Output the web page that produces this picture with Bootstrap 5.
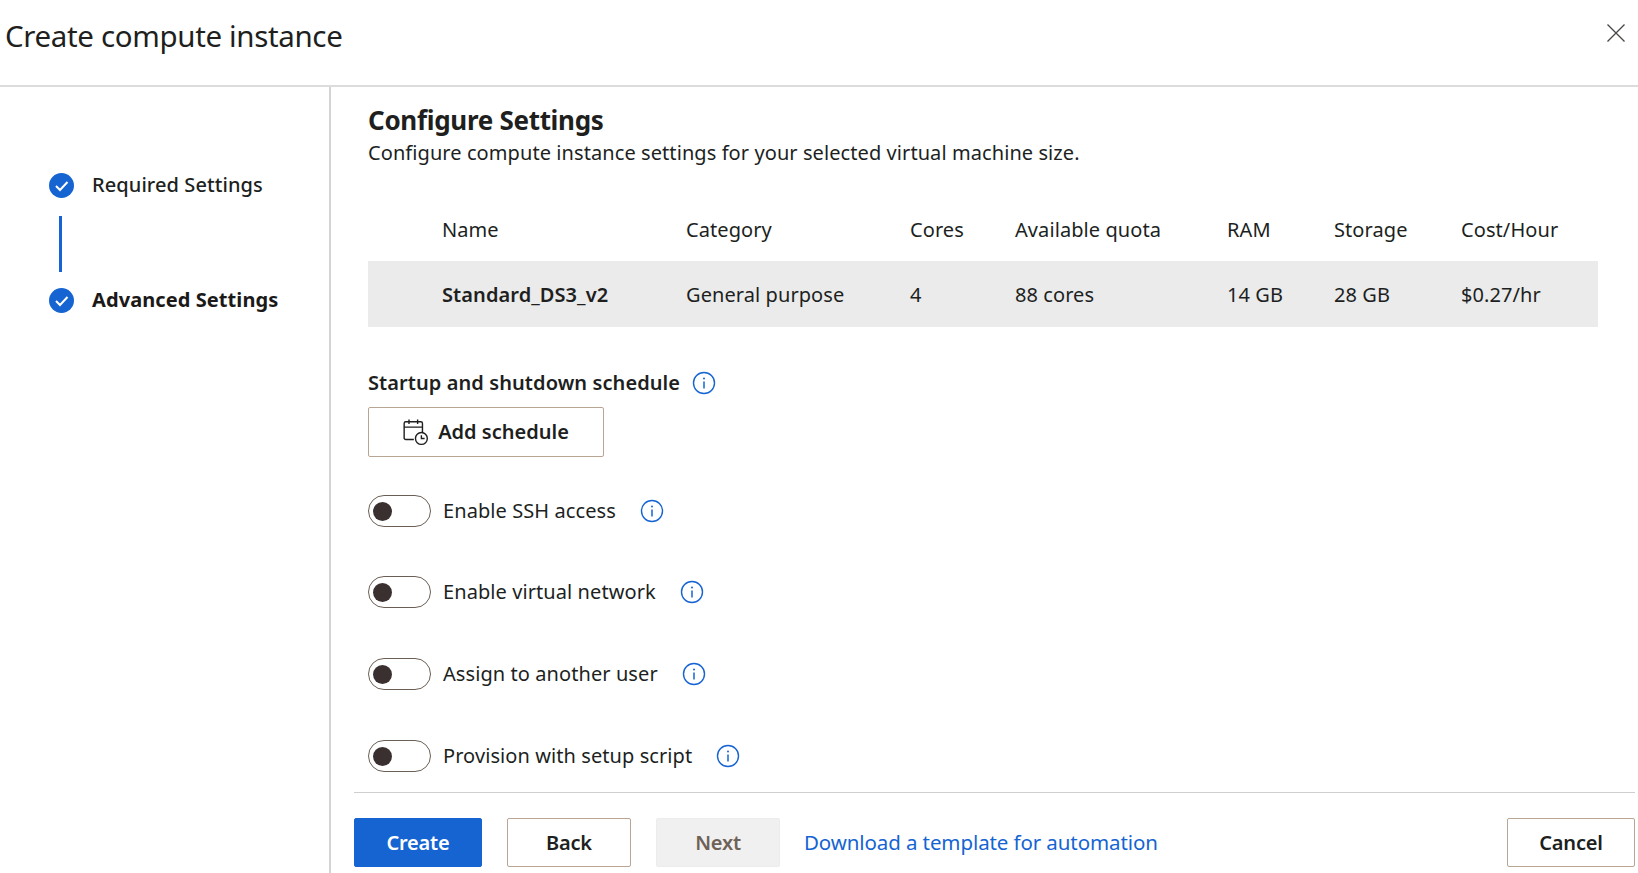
<!DOCTYPE html>
<html lang="en">
<head>
<meta charset="utf-8">
<title>Create compute instance</title>
<link href="https://cdn.jsdelivr.net/npm/bootstrap@5.3.0/dist/css/bootstrap.min.css" rel="stylesheet">
<style>
html,body{height:873px;overflow:hidden}
body{font-family:"Noto Sans","Open Sans",sans-serif;color:#201f1e;background:#fff;font-size:20px;letter-spacing:.08px}
.head-bar{height:87px;border-bottom:2px solid #dcdcdc;padding:0 12px 0 5px}
.head-title{font-size:29.500px;font-weight:400;letter-spacing:-.35px;line-height:1;margin:0 0 14px}
.close-x{width:20px;height:20px;margin:0 0 19px;padding:0;border:0;background:none;line-height:0}
.body-row{height:786px}
.side-pane{width:331px;border-right:2px solid #d4d4d4;padding:85px 0 0 49px}
.step-row{height:26px;gap:18px;font-size:20px;line-height:26px;font-weight:500}
.step-row.strong-step{font-weight:700;color:#1b1a19}
.step-link{width:3px;height:56px;background:#1564d2;margin:18px 0 15px 10px}
.right-col{min-width:0}
.main-pane{height:705px;padding:15px 41px 0 37px}
.main-title{font-size:26px;font-weight:700;line-height:36px;margin:0;letter-spacing:-.3px}
.main-sub{font-size:20px;line-height:28px;padding-top:1px;margin:0 0 43px}
.vm-grid{display:grid;grid-template-columns:318px 224px 105px 212px 107px 127px 1fr;width:1230px;margin:0 0 43px}
.vm-grid>div{display:flex;align-items:center;white-space:nowrap}
.vm-grid>.h-cell{height:51px;padding-bottom:12px}
.vm-grid>.r-cell{height:66px;background:#ebebeb;padding-top:2px}
.vm-grid>.first-cell{padding-left:74px}
.name-cell{font-weight:600}
.sched-label{font-weight:600;line-height:26px;gap:12px;font-size:20px}
.add-btn{width:236px;height:50px;margin:11px 0 38px;border:1px solid #b9a593;border-radius:2px;background:#fff;gap:9px;font-size:20px;font-weight:600;color:#201f1e;padding:0}
.opt-row{height:32px;margin-bottom:50px;line-height:32px}
.opt-row:last-child{margin-bottom:0}
.opt-row.tight-row{margin-bottom:49px}
.tgl{width:63px;height:32px;flex:none;border:1px solid #6b5f55;border-radius:16px;margin-right:12px;padding-left:4px;background:#fff}
.tgl-dot{width:19px;height:19px;border-radius:50%;background:#3b3030}
.info-ic{width:24px;height:24px;flex:none}
.foot-bar{height:81px;margin-left:23px;margin-right:3px;border-top:1px solid #cfcfcf;padding-top:25px}
.foot-btn{width:124px;height:49px;border-radius:2px;font-size:20px;font-weight:600;padding:0;letter-spacing:-.2px;margin-right:25px}
.b-primary{width:128px;background:#1564d2;border:1px solid #1564d2;color:#fff}
.b-plain{background:#fff;border:1px solid #b9a593;color:#201f1e}
.b-off{background:#f0f0f0;border:1px solid #ececec;color:#6e6158;margin-right:24px;opacity:1}
.tpl-link{font-size:20.500px;color:#1564d2;text-decoration:none;letter-spacing:-.1px;margin-top:9px}
.b-cancel{width:128px;margin-right:0}
</style>
</head>
<body>
<header class="head-bar d-flex align-items-center justify-content-between">
  <h1 class="head-title">Create compute instance</h1>
  <button class="close-x" type="button" aria-label="Close"><svg width="20" height="20" viewBox="0 0 20 20"><path d="M1.500 1.500 18.500 18.500M18.500 1.500 1.500 18.500" stroke="#4a4643" stroke-width="1.300" fill="none"/></svg></button>
</header>
<div class="body-row d-flex">
  <aside class="side-pane flex-shrink-0">
    <div class="step-row d-flex align-items-center">
      <svg width="25" height="25" viewBox="0 0 25 25"><circle cx="12.500" cy="12.500" r="12.500" fill="#1564d2"/><path d="M7 13l4 4 7.500-8" stroke="#fff" stroke-width="2" fill="none"/></svg>
      <span>Required Settings</span>
    </div>
    <div class="step-link"></div>
    <div class="step-row strong-step d-flex align-items-center">
      <svg width="25" height="25" viewBox="0 0 25 25"><circle cx="12.500" cy="12.500" r="12.500" fill="#1564d2"/><path d="M7 13l4 4 7.500-8" stroke="#fff" stroke-width="2" fill="none"/></svg>
      <span>Advanced Settings</span>
    </div>
  </aside>
  <div class="right-col flex-grow-1 d-flex flex-column">
    <main class="main-pane">
      <h2 class="main-title">Configure Settings</h2>
      <p class="main-sub">Configure compute instance settings for your selected virtual machine size.</p>
      <div class="vm-grid">
        <div class="h-cell first-cell">Name</div><div class="h-cell">Category</div><div class="h-cell">Cores</div><div class="h-cell">Available quota</div><div class="h-cell">RAM</div><div class="h-cell">Storage</div><div class="h-cell">Cost/Hour</div>
        <div class="r-cell first-cell name-cell">Standard_DS3_v2</div><div class="r-cell">General purpose</div><div class="r-cell">4</div><div class="r-cell">88 cores</div><div class="r-cell">14 GB</div><div class="r-cell">28 GB</div><div class="r-cell">$0.27/hr</div>
      </div>
      <div class="sched-label d-flex align-items-center"><span>Startup and shutdown schedule</span>
        <svg class="info-ic" viewBox="0 0 24 24"><circle cx="12" cy="12" r="10.500" fill="none" stroke="#1564d2" stroke-width="1.400"/><path d="M12 10.500v7" stroke="#1564d2" stroke-width="1.500"/><circle cx="12" cy="7.500" r="1" fill="#1564d2"/></svg>
      </div>
      <button class="add-btn d-flex align-items-center justify-content-center" type="button">
        <svg width="26" height="28" viewBox="0 0 24 26" fill="none" stroke="#201f1e" stroke-width="1.300"><path d="M10 20H2.500a1.500 1.500 0 0 1-1.500-1.500V5a1.500 1.500 0 0 1 1.500-1.500h14A1.500 1.500 0 0 1 18 5v8M1 8.500h17M5.500 1.500v4M13.500 1.500v4"/><circle cx="17" cy="19" r="5.500"/><path d="M17 16v3h3"/></svg>
        <span>Add schedule</span>
      </button>
      <div class="opt-row tight-row d-flex align-items-center"><div class="tgl d-flex align-items-center"><div class="tgl-dot"></div></div><span>Enable SSH access</span><svg class="info-ic ms-4" viewBox="0 0 24 24"><circle cx="12" cy="12" r="10.500" fill="none" stroke="#1564d2" stroke-width="1.400"/><path d="M12 10.500v7" stroke="#1564d2" stroke-width="1.500"/><circle cx="12" cy="7.500" r="1" fill="#1564d2"/></svg></div>
      <div class="opt-row d-flex align-items-center"><div class="tgl d-flex align-items-center"><div class="tgl-dot"></div></div><span>Enable virtual network</span><svg class="info-ic ms-4" viewBox="0 0 24 24"><circle cx="12" cy="12" r="10.500" fill="none" stroke="#1564d2" stroke-width="1.400"/><path d="M12 10.500v7" stroke="#1564d2" stroke-width="1.500"/><circle cx="12" cy="7.500" r="1" fill="#1564d2"/></svg></div>
      <div class="opt-row d-flex align-items-center"><div class="tgl d-flex align-items-center"><div class="tgl-dot"></div></div><span>Assign to another user</span><svg class="info-ic ms-4" viewBox="0 0 24 24"><circle cx="12" cy="12" r="10.500" fill="none" stroke="#1564d2" stroke-width="1.400"/><path d="M12 10.500v7" stroke="#1564d2" stroke-width="1.500"/><circle cx="12" cy="7.500" r="1" fill="#1564d2"/></svg></div>
      <div class="opt-row d-flex align-items-center"><div class="tgl d-flex align-items-center"><div class="tgl-dot"></div></div><span>Provision with setup script</span><svg class="info-ic ms-4" viewBox="0 0 24 24"><circle cx="12" cy="12" r="10.500" fill="none" stroke="#1564d2" stroke-width="1.400"/><path d="M12 10.500v7" stroke="#1564d2" stroke-width="1.500"/><circle cx="12" cy="7.500" r="1" fill="#1564d2"/></svg></div>
    </main>
    <footer class="foot-bar d-flex align-items-start">
      <button class="foot-btn b-primary" type="button">Create</button>
      <button class="foot-btn b-plain" type="button">Back</button>
      <button class="foot-btn b-off" type="button" disabled>Next</button>
      <a class="tpl-link" href="#">Download a template for automation</a>
      <button class="foot-btn b-plain b-cancel ms-auto" type="button">Cancel</button>
    </footer>
  </div>
</div>
<script src="https://cdn.jsdelivr.net/npm/bootstrap@5.3.0/dist/js/bootstrap.bundle.min.js"></script>
</body>
</html>
